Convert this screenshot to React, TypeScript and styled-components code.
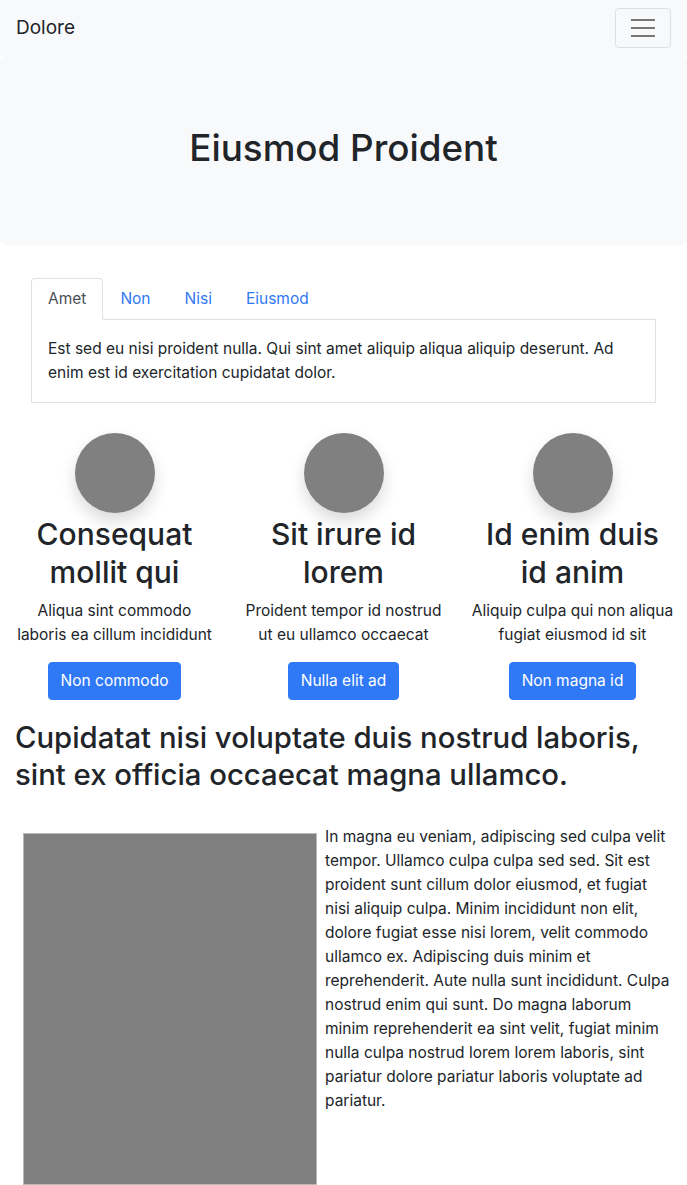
import React from "react";
import styled, { createGlobalStyle } from "styled-components";

const Global = createGlobalStyle`
  * { box-sizing: border-box; }
  body {
    margin: 0;
    font-family: Inter, "Noto Sans", sans-serif;
    font-size: 15.5px;
    line-height: 24px;
    color: #212529;
    background: #fff;
  }
`;

const Navbar = styled.nav`
  display: flex;
  align-items: center;
  justify-content: space-between;
  height: 56px;
  padding: 8px 16px;
  background: #f8f9fa;
`;

const Brand = styled.a`
  font-size: 19px;
  color: #212529;
  text-decoration: none;
`;

const Toggler = styled.button`
  width: 56px;
  height: 40px;
  border: 1px solid rgba(0, 0, 0, 0.1);
  border-radius: 4px;
  background: transparent;
  display: flex;
  flex-direction: column;
  align-items: center;
  justify-content: center;
  gap: 6px;
  padding: 0;
`;

const Line = styled.span`
  display: block;
  width: 24px;
  height: 2px;
  background: #777;
`;

const Jumbotron = styled.header`
  background: #f8f9fa;
  border-radius: 6px;
  height: 189px;
  padding-bottom: 4px;
  display: flex;
  align-items: center;
  justify-content: center;
`;

const Title = styled.h1`
  margin: 0;
  font-size: 36.8px;
  font-weight: 500;
  line-height: 1.2;
`;

const TabsWrap = styled.section`
  margin: 33px 31px 0;
`;

const TabList = styled.ul`
  display: flex;
  list-style: none;
  margin: 0;
  padding: 0;
  border-bottom: 1px solid #dee2e6;
`;

const Tab = styled.li<{ $active?: boolean }>`
  padding: 8px 16px;
  margin-bottom: -1px;
  border: 1px solid ${(p) => (p.$active ? "#dee2e6" : "transparent")};
  border-bottom-color: ${(p) => (p.$active ? "#fff" : "transparent")};
  border-radius: 4px 4px 0 0;
  background: ${(p) => (p.$active ? "#fff" : "transparent")};
  color: ${(p) => (p.$active ? "#495057" : "#3079f6")};
  line-height: 24px;
`;

const TabPanel = styled.div`
  border: 1px solid #dee2e6;
  border-top: none;
  padding: 17px 16px;
`;

const Features = styled.div`
  display: grid;
  grid-template-columns: repeat(3, 1fr);
  margin-top: 30px;
`;

const Feature = styled.div`
  display: flex;
  flex-direction: column;
  align-items: center;
  text-align: center;
  padding: 0 12px;
`;

const Avatar = styled.div`
  width: 80px;
  height: 80px;
  border-radius: 50%;
  background: #808080;
  box-shadow: 0 8px 16px rgba(0, 0, 0, 0.15);
`;

const FeatureTitle = styled.h2`
  margin: 2px 0 8px;
  font-size: 30px;
  font-weight: 500;
  line-height: 38px;
`;

const FeatureText = styled.p`
  margin: 0 0 15px;
  line-height: 24px;
`;

const Button = styled.button`
  font-family: inherit;
  font-size: 15.5px;
  line-height: 24px;
  padding: 6px 12px;
  border: 1px solid #3079f6;
  border-radius: 4px;
  background: #3079f6;
  color: #fff;
`;

const Article = styled.section`
  padding: 0 15px;
  margin-top: 19px;
`;

const ArticleTitle = styled.h2`
  margin: 0 0 32px;
  font-size: 29.3px;
  font-weight: 500;
  line-height: 37px;
`;

const Figure = styled.div`
  float: left;
  width: 294px;
  height: 352px;
  margin: 8px;
  background: #808080;
  border: 1px solid #b8b8b8;
`;

const Body = styled.p`
  margin: 0;
  line-height: 24px;
`;

const features = [
  {
    title: "Consequat mollit qui",
    text: "Aliqua sint commodo laboris ea cillum incididunt",
    button: "Non commodo",
  },
  {
    title: "Sit irure id lorem",
    text: "Proident tempor id nostrud ut eu ullamco occaecat",
    button: "Nulla elit ad",
  },
  {
    title: "Id enim duis id anim",
    text: "Aliquip culpa qui non aliqua fugiat eiusmod id sit",
    button: "Non magna id",
  },
];

export default function App() {
  return (
    <>
      <Global />
      <Navbar>
        <Brand href="#">Dolore</Brand>
        <Toggler aria-label="menu">
          <Line />
          <Line />
          <Line />
        </Toggler>
      </Navbar>
      <Jumbotron>
        <Title>Eiusmod Proident</Title>
      </Jumbotron>
      <TabsWrap>
        <TabList>
          <Tab $active>Amet</Tab>
          <Tab>Non</Tab>
          <Tab>Nisi</Tab>
          <Tab>Eiusmod</Tab>
        </TabList>
        <TabPanel>
          Est sed eu nisi proident nulla. Qui sint amet aliquip aliqua aliquip deserunt. Ad enim est
          id exercitation cupidatat dolor.
        </TabPanel>
      </TabsWrap>
      <Features>
        {features.map((f) => (
          <Feature key={f.title}>
            <Avatar />
            <FeatureTitle>{f.title}</FeatureTitle>
            <FeatureText>{f.text}</FeatureText>
            <Button>{f.button}</Button>
          </Feature>
        ))}
      </Features>
      <Article>
        <ArticleTitle>
          Cupidatat nisi voluptate duis nostrud laboris, sint ex officia occaecat magna ullamco.
        </ArticleTitle>
        <Figure />
        <Body>
          In magna eu veniam, adipiscing sed culpa velit tempor. Ullamco culpa culpa sed sed. Sit est
          proident sunt cillum dolor eiusmod, et fugiat nisi aliquip culpa. Minim incididunt non elit,
          dolore fugiat esse nisi lorem, velit commodo ullamco ex. Adipiscing duis minim et
          reprehenderit. Aute nulla sunt incididunt. Culpa nostrud enim qui sunt. Do magna laborum
          minim reprehenderit ea sint velit, fugiat minim nulla culpa nostrud lorem lorem laboris, sint
          pariatur dolore pariatur laboris voluptate ad pariatur.
        </Body>
      </Article>
    </>
  );
}
